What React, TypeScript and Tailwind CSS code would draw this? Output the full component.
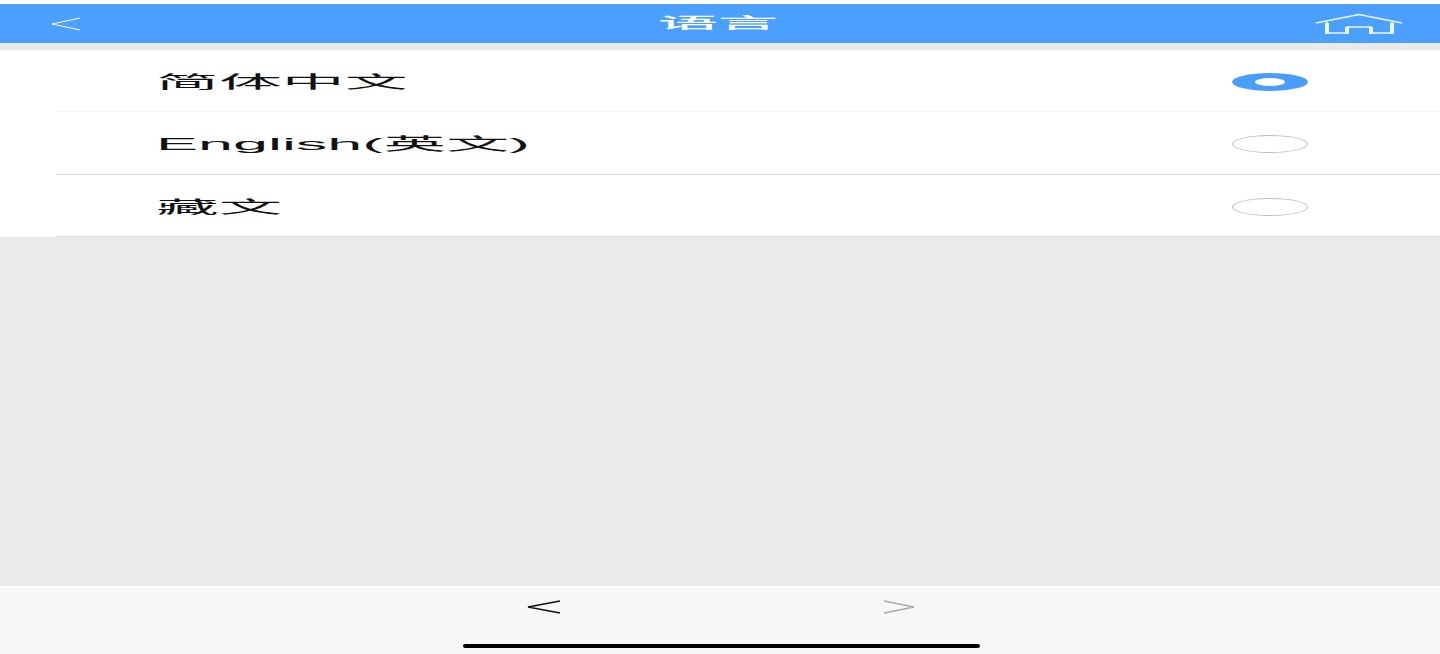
const FONT = "font-['Liberation_Sans','Noto_Sans_CJK_SC',sans-serif]";

function Row({ label, selected, line, tall }: { label: string; selected?: boolean; line: string; tall?: boolean }) {
  return (
    <div className={`${tall ? "h-[63px]" : "h-[62px]"} bg-white flex flex-col`}>
      <div className="flex-1 flex items-center justify-between pl-[156px] pr-[132px] pt-[2px]">
        <span className="text-[17px] leading-[24px] text-[#111] whitespace-nowrap origin-left scale-x-[3.7] relative top-[1px]">
          {label}
        </span>
        {selected ? (
          <div className="w-[76px] h-[18px] rounded-[50%] bg-[#4a9dfa] flex items-center justify-center">
            <div className="w-[30px] h-[8px] rounded-[50%] bg-white" />
          </div>
        ) : (
          <div className="w-[76px] h-[18px] rounded-[50%] border border-[#bdbdbd] bg-white" />
        )}
      </div>
      <div className={`ml-[56px] h-[1px] ${line}`} />
    </div>
  );
}

export default function App() {
  return (
    <div className={`h-[654px] w-full overflow-hidden flex flex-col bg-[#eaeaea] ${FONT}`}>
      <div className="h-[4px] bg-white" />
      <header className="h-[39px] bg-[#4a9fff] flex items-center justify-between pl-[51px] pr-[38px]">
        <svg width="30" height="14" viewBox="0 0 30 14" fill="none" stroke="#fff" strokeWidth="1">
          <path d="M29 1 L1 7 L29 13" />
        </svg>
        <span className="text-[15px] leading-[24px] font-medium text-white whitespace-nowrap scale-x-[4] relative left-[20px] top-[-1px]">语言</span>
        <svg width="86" height="22" viewBox="0 0 86 22" fill="none" stroke="#eef7ff">
          <path d="M0 10 L43 1.5 L86 10" strokeWidth="1.5" />
          <path d="M11 9 V20 H31 V14 H55 V20 H76 V9" strokeWidth="1.5" />
          <path d="M11 10 V21 M31 14 V21 M55 14 V21 M76 10 V21" strokeWidth="4" />
        </svg>
      </header>
      <div className="h-[7px]" />
      <Row label="简体中文" selected line="bg-[#f6f6f6]" />
      <Row label="English(英文)" line="bg-[#dddddd]" tall />
      <Row label="藏文" line="bg-[#dddddd]" />
      <div className="flex-1" />
      <footer className="h-[68px] bg-[#f7f7f7] border-t-2 border-white flex flex-col">
        <div className="flex items-center pl-[527px] pt-[12px] gap-[322px]">
          <svg width="34" height="14" viewBox="0 0 34 14" fill="none" stroke="#111" strokeWidth="1.3">
            <path d="M33 1 L1 7 L33 13" />
          </svg>
          <svg width="32" height="14" viewBox="0 0 32 14" fill="none" stroke="#aaaaaa" strokeWidth="1.3">
            <path d="M1 1 L31 7 L1 13" />
          </svg>
        </div>
        <div className="ml-[463px] mt-[30px] w-[517px] h-[4px] rounded-full bg-black" />
      </footer>
    </div>
  );
}
